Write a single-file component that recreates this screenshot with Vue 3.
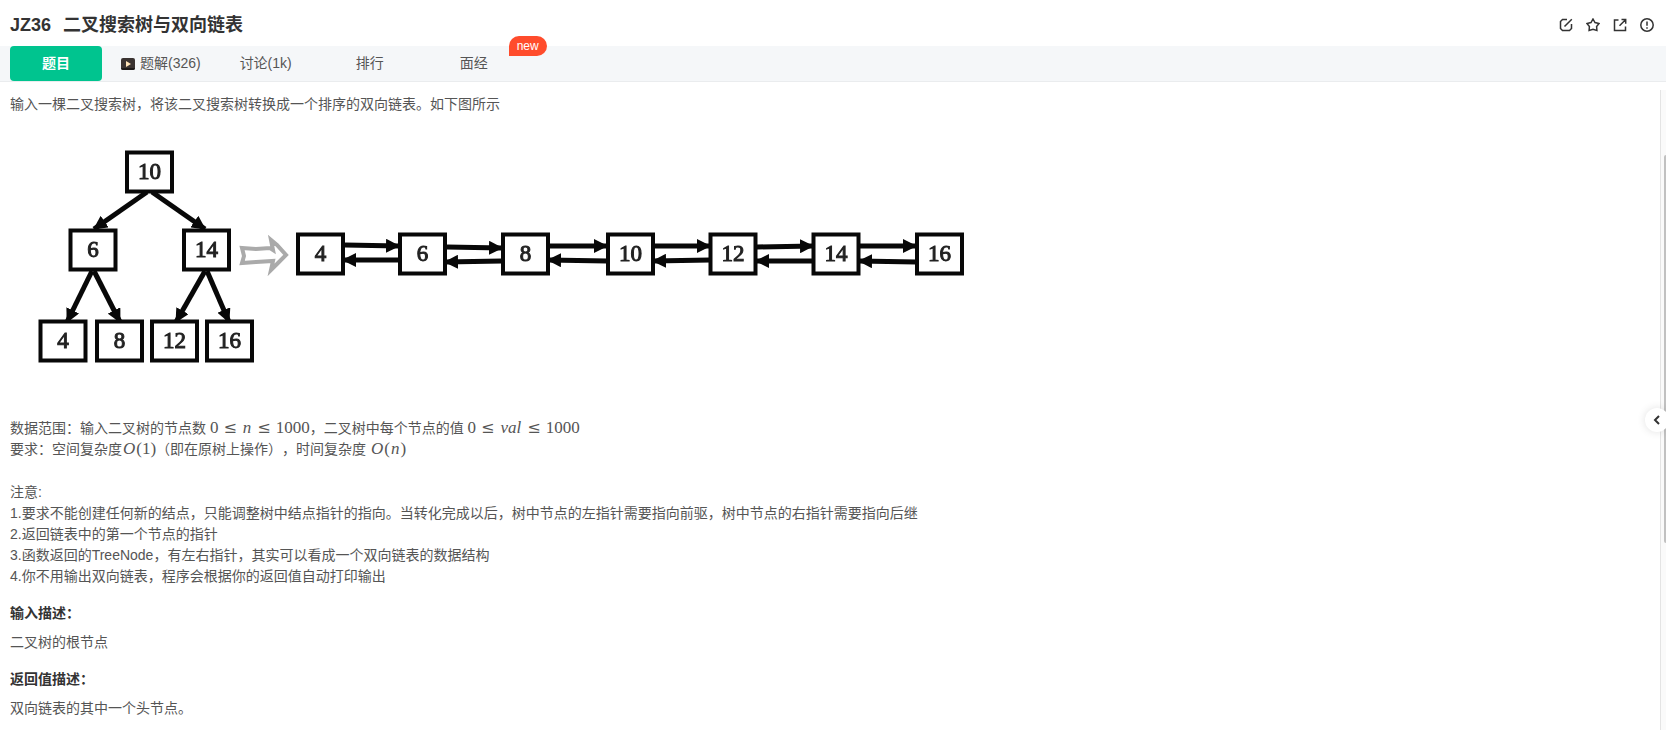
<script setup>
import { ref } from 'vue'

const active = ref('desc')
const tabs = [
  { id: 'desc', label: '题目' },
  { id: 'solution', label: '题解(326)', video: true },
  { id: 'discuss', label: '讨论(1k)' },
  { id: 'rank', label: '排行' },
  { id: 'interview', label: '面经', badge: 'new' },
]

const nodes = [
  { x: 149.5, y: 172, v: 10 },
  { x: 93, y: 250, v: 6 },
  { x: 206.5, y: 250, v: 14 },
  { x: 63, y: 341, v: 4 },
  { x: 119.5, y: 341, v: 8 },
  { x: 174.5, y: 341, v: 12 },
  { x: 229.5, y: 341, v: 16 },
  { x: 320.5, y: 254, v: 4 },
  { x: 422.5, y: 254, v: 6 },
  { x: 525.5, y: 254, v: 8 },
  { x: 630.5, y: 254, v: 10 },
  { x: 733, y: 254, v: 12 },
  { x: 836, y: 254, v: 14 },
  { x: 939.5, y: 254, v: 16 },
]

const edges = [
  [147, 192, 94, 229],
  [152, 192, 205, 229],
  [92, 271, 67, 322],
  [94, 271, 120, 322],
  [205, 271, 176, 322],
  [207, 271, 229, 322],
  [345, 245, 399, 246],
  [399, 260, 343, 260],
  [447, 247, 502, 248],
  [502, 261, 445, 262],
  [550, 246, 607, 246],
  [607, 261, 548, 260],
  [655, 246, 710, 246],
  [710, 260, 653, 261],
  [757, 247, 813, 246],
  [813, 261, 756, 261],
  [860, 246, 916, 246],
  [916, 262, 859, 261],
]
</script>

<template>
  <main class="page">
    <header class="head">
      <h1><span>JZ36</span><span>二叉搜索树与双向链表</span></h1>
      <div class="tools">
        <button type="button" aria-label="编辑">
          <svg viewBox="0 0 14 14"><path d="M8 1.500H3.500L1.500 3.500V10.500L3.500 12.500h7L12.500 10.500V6M12.800 1.200L5.500 8.500" /></svg>
        </button>
        <button type="button" aria-label="收藏">
          <svg viewBox="0 0 14 14"><path d="M7 1L9 4.500L13.100 5.500L10.600 8.600L10.900 12.500L7 11.300L3.100 12.500L3.400 8.600L.9 5.500L5 4.500Z" /></svg>
        </button>
        <button type="button" aria-label="分享">
          <svg viewBox="0 0 14 14"><path d="M5.500 2H1.500v10.500h11V8.500M8.500 1.500h4.200v4.200M12.500 1.700L6.500 7.700" /></svg>
        </button>
        <button type="button" aria-label="反馈">
          <svg viewBox="0 0 14 14"><circle cx="7" cy="7" r="6.200" /><path d="M7 3.500v4.300M7 9.300v1.400" /></svg>
        </button>
      </div>
    </header>

    <nav class="tabs">
      <button
        v-for="t in tabs"
        :key="t.id"
        type="button"
        class="tab"
        :class="{ on: active === t.id }"
        @click="active = t.id"
      >
        <svg v-if="t.video" class="video" viewBox="0 0 14 12">
          <rect width="14" height="12" rx="2" fill="#3a3331" />
          <path d="M0 10h14v0a2 2 0 0 1-2 2H2a2 2 0 0 1-2-2z" fill="#1d1918" />
          <path d="M5 3l5 3-5 3z" fill="#ffe3b8" />
        </svg>
        {{ t.label }}
        <span v-if="t.badge" class="badge">{{ t.badge }}</span>
      </button>
    </nav>

    <section class="panel">
      <p>输入一棵二叉搜索树，将该二叉搜索树转换成一个排序的双向链表。如下图所示</p>

      <svg class="diagram" viewBox="10 134 980 250" role="img" aria-label="二叉搜索树转换为双向链表">
        <defs>
          <marker id="tip" markerUnits="userSpaceOnUse" markerWidth="14" markerHeight="14" refX="13" refY="7" orient="auto">
            <path d="M0 0L14 7L0 14Z" fill="#080808" />
          </marker>
        </defs>
        <g class="ink">
          <line v-for="(e, i) in edges" :key="'e' + i" :x1="e[0]" :y1="e[1]" :x2="e[2]" :y2="e[3]" marker-end="url(#tip)" />
          <g v-for="(n, i) in nodes" :key="'n' + i">
            <rect :x="n.x - 22.5" :y="n.y - 19.5" width="45" height="39" />
            <text :x="n.x" :y="n.y + 7">{{ n.v }}</text>
          </g>
          <path class="hollow" d="M242 248L256 249L270 248L273 250L271 240L277 245L286 255L277 264L271 270L273 261L256 262L242 263L244 256Z" />
        </g>
      </svg>

      <p>
        数据范围：输入二叉树的节点数 <span class="math">0<b>≤</b><i>n</i><b>≤</b>1000</span>，二叉树中每个节点的值 <span class="math">0<b>≤</b><i>val</i><b>≤</b>1000</span><br>
        要求：空间复杂度<span class="math"><i>O</i>(1)</span>（即在原树上操作），时间复杂度 <span class="math"><i>O</i>(<i>n</i>)</span>
      </p>
      <p class="notes">
        注意:<br>
        1.要求不能创建任何新的结点，只能调整树中结点指针的指向。当转化完成以后，树中节点的左指针需要指向前驱，树中节点的右指针需要指向后继<br>
        2.返回链表中的第一个节点的指针<br>
        3.函数返回的TreeNode，有左右指针，其实可以看成一个双向链表的数据结构<br>
        4.你不用输出双向链表，程序会根据你的返回值自动打印输出
      </p>
      <h2>输入描述：</h2>
      <p>二叉树的根节点</p>
      <h2>返回值描述：</h2>
      <p>双向链表的其中一个头节点。</p>

      <div class="track"><div class="thumb"></div></div>
    </section>

    <button type="button" class="fold" aria-label="收起">
      <svg viewBox="0 0 8 10"><path d="M6 1L2 5L6 9" /></svg>
    </button>
  </main>
</template>

<style>
body {
  margin: 0;
  background: #fff;
}
</style>

<style scoped>
.page {
  position: relative;
  display: flex;
  flex-direction: column;
  height: 100vh;
  overflow: hidden;
  color: #555;
  font: 14px/21px "Liberation Sans", "Noto Sans CJK SC", sans-serif;
  text-spacing-trim: space-all;
}
button {
  padding: 0;
  border: 0;
  background: none;
  color: inherit;
  font: inherit;
  cursor: pointer;
}
.head {
  display: flex;
  flex: none;
  align-items: center;
  justify-content: space-between;
  height: 46px;
  padding: 4px 12px 0 10px;
  box-sizing: border-box;
}
h1 {
  display: flex;
  gap: 12px;
  margin: 0;
  color: #333;
  font-size: 18px;
  line-height: 26px;
  font-weight: 600;
}
.tools {
  display: flex;
  gap: 13px;
}
.tools svg {
  display: block;
  width: 14px;
  height: 14px;
  fill: none;
  stroke: #333;
  stroke-width: 1.5;
}
.tabs {
  display: flex;
  flex: none;
  gap: 12px;
  height: 35px;
  padding: 0 10px;
  background: #f5f7f9;
  border-bottom: 1px solid #eaecee;
}
.tab {
  position: relative;
  display: flex;
  align-items: center;
  justify-content: center;
  min-width: 92px;
  padding: 0 7px;
}
.tab.on {
  border-radius: 4px;
  background: #00c48f;
  color: #fff;
  font-weight: 600;
}
.video {
  width: 14px;
  height: 12px;
  margin-right: 5px;
}
.badge {
  position: absolute;
  top: -10px;
  left: 81px;
  padding: 0 8px;
  border-radius: 10px 10px 10px 0;
  background: #ff4c2c;
  color: #fff;
  font-size: 12px;
  line-height: 20px;
}
.panel {
  position: relative;
  flex: 1;
  margin-top: 8px;
  padding: 4px 16px 0 10px;
}
p {
  margin: 0;
}
.diagram {
  display: block;
  width: 980px;
  max-width: 100%;
  margin: 19px 0 34px;
}
.ink {
  filter: blur(0.6px);
}
.diagram line {
  stroke: #080808;
  stroke-width: 5;
}
.diagram rect {
  fill: #fff;
  stroke: #080808;
  stroke-width: 4;
}
.diagram text {
  fill: #222;
  stroke: #222;
  stroke-width: 1;
  font: 23px "Liberation Serif", serif;
  text-anchor: middle;
}
.diagram .hollow {
  fill: none;
  stroke: #aaa;
  stroke-width: 4;
}
.math {
  font: 17px/20px "Liberation Serif", serif;
}
.math i {
  margin: 0 1px;
}
.math b {
  margin: 0 5px;
  font: 16px/20px "DejaVu Serif", serif;
}
.notes {
  margin-top: 22px;
}
h2 {
  margin: 16px 0 8px;
  color: #333;
  font-size: 14px;
  line-height: 21px;
  font-weight: 600;
}
.track {
  position: absolute;
  top: 0;
  right: 0;
  bottom: 0;
  width: 5px;
  border-left: 1px solid #e4e4e4;
  background: #fafafa;
}
.thumb {
  width: 2px;
  height: 388px;
  margin: 65px 0 0 auto;
  border-radius: 2px 0 0 2px;
  background: #c1c1c1;
}
.fold {
  position: absolute;
  top: 408px;
  right: -3px;
  display: flex;
  align-items: center;
  justify-content: center;
  width: 24px;
  height: 24px;
  border-radius: 50%;
  background: #fff;
  box-shadow: 0 0 8px rgba(0, 0, 0, 0.12);
}
.fold svg {
  width: 8px;
  height: 10px;
  fill: none;
  stroke: #333;
  stroke-width: 2;
}
</style>
